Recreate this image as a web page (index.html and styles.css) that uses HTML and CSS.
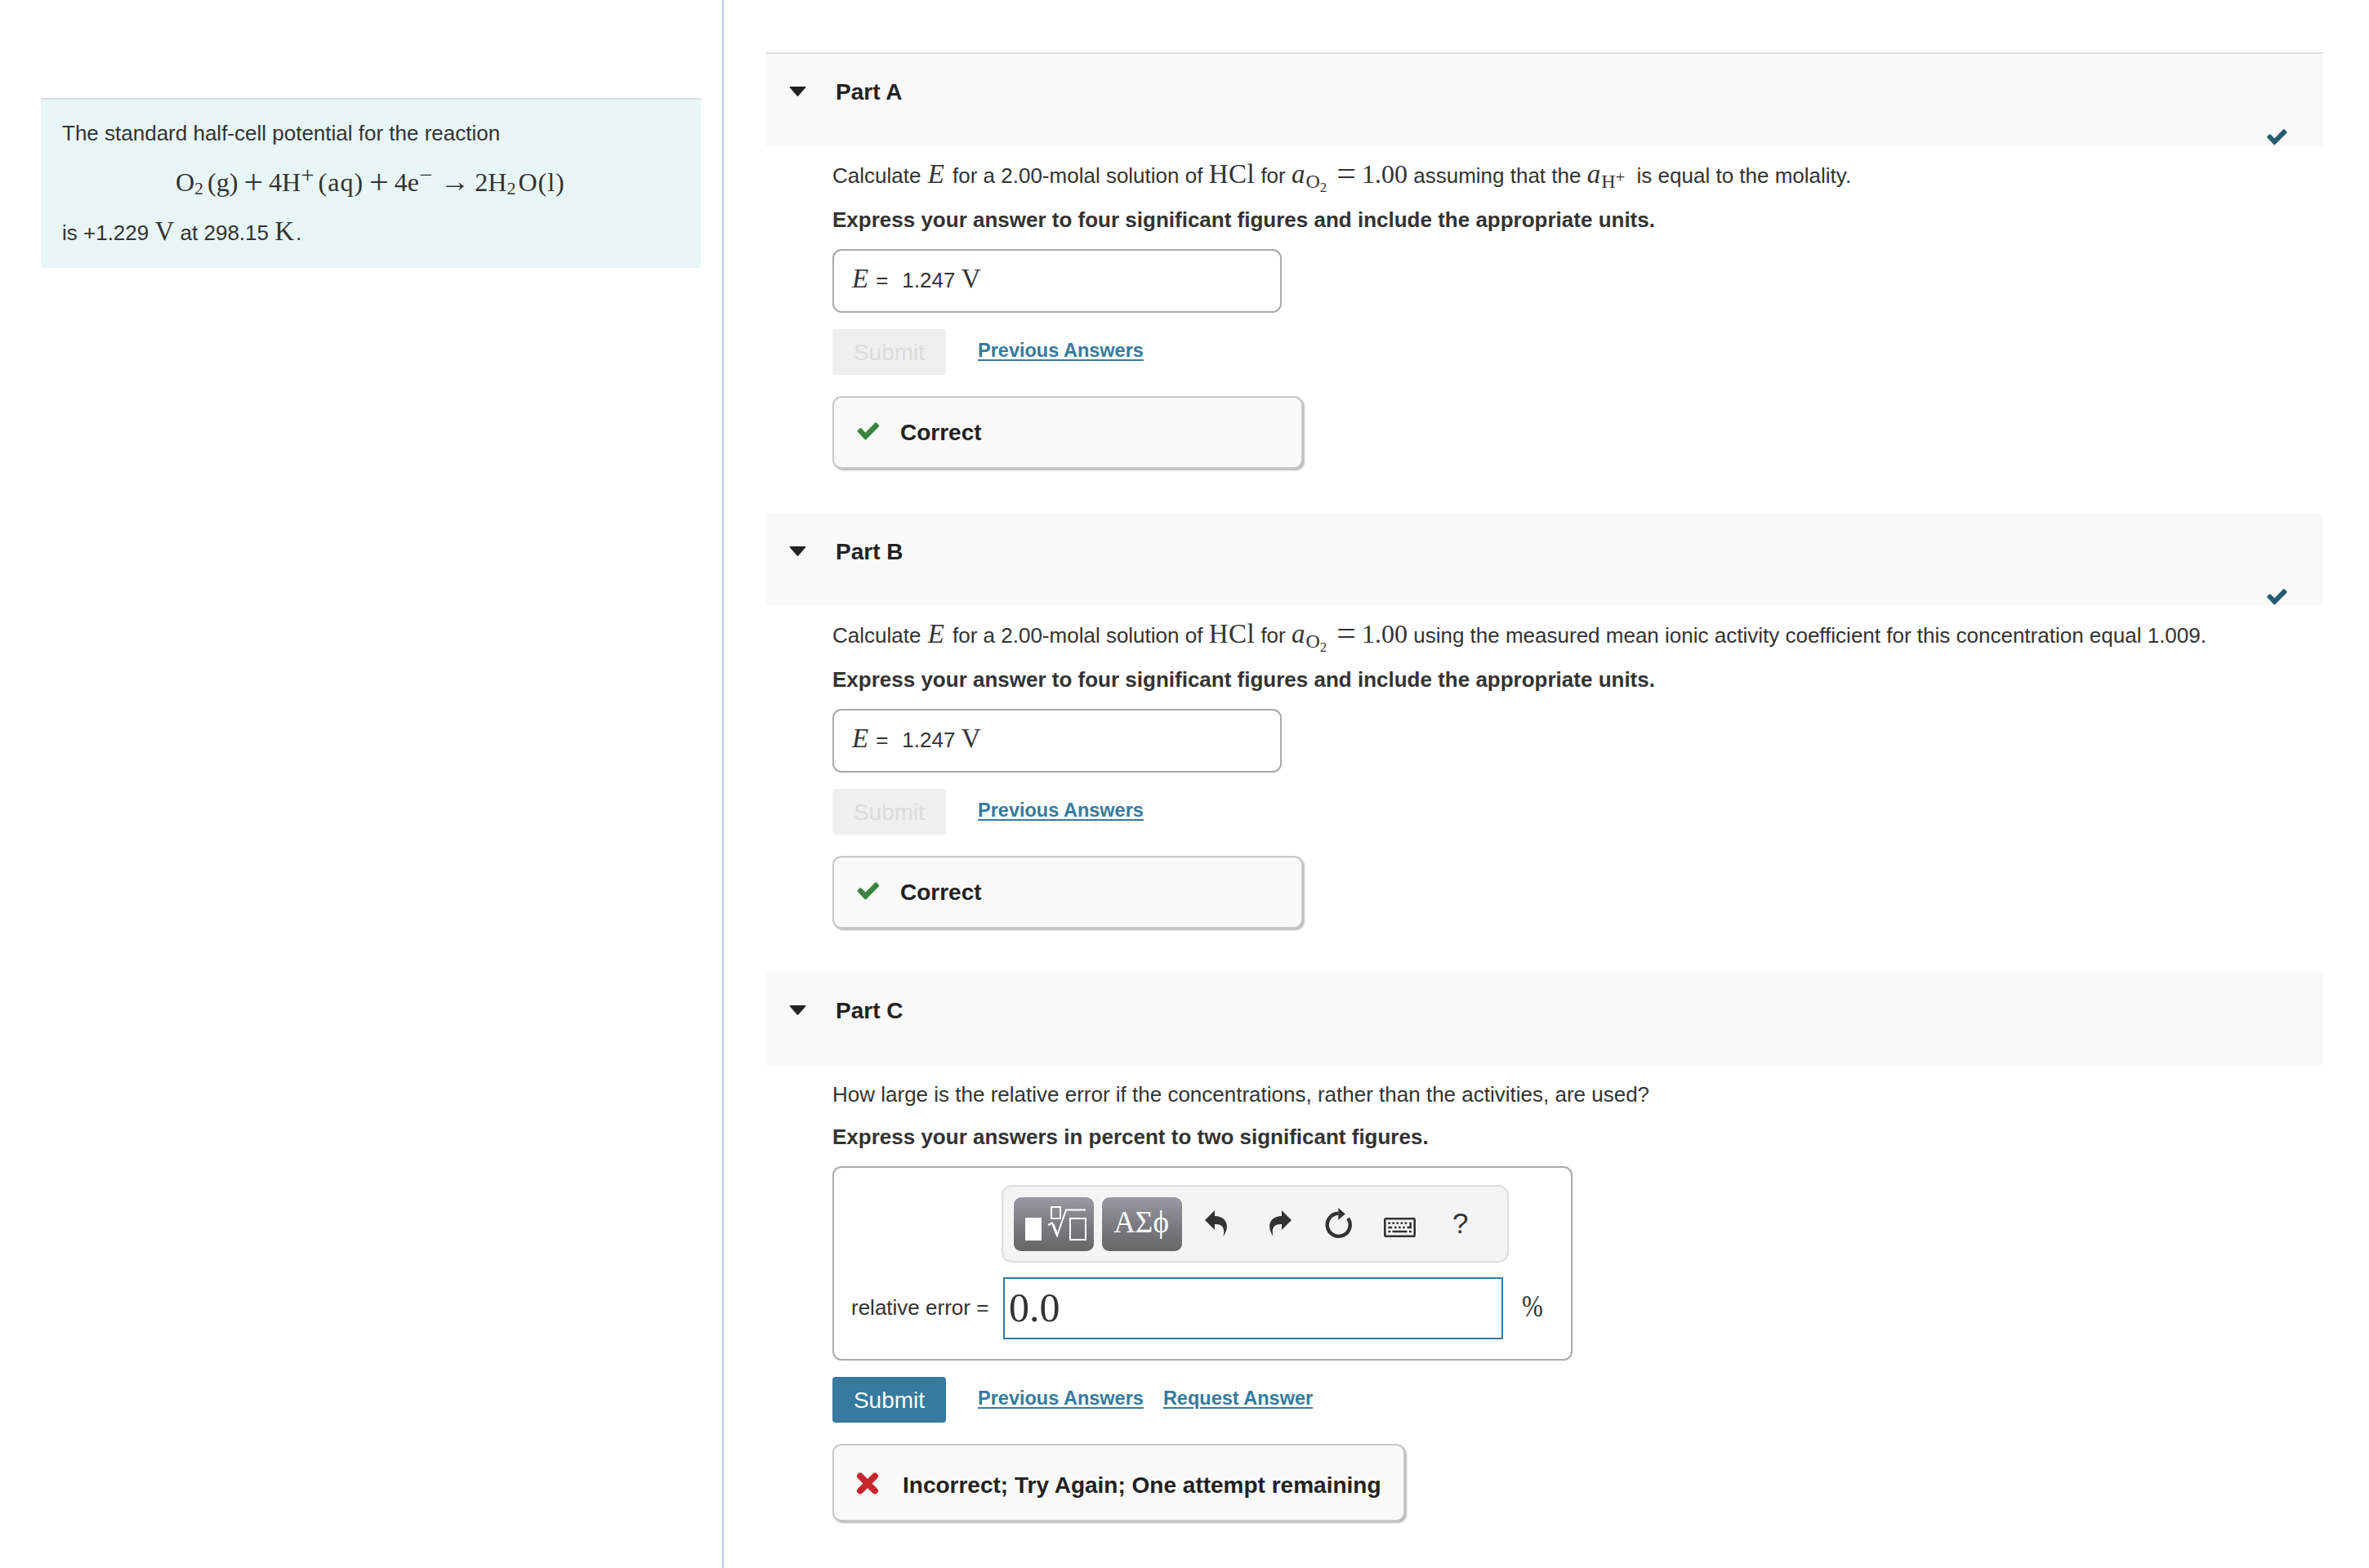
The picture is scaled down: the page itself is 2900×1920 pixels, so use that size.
FILE: index.html
```
<!DOCTYPE html>
<html lang="en">
<head>
<meta charset="utf-8">
<title>Half-cell potential</title>
<link rel="stylesheet" href="styles.css">
</head>
<body>
<svg class="defs" width="0" height="0">
  <symbol id="check" viewBox="0 0 25 20"><path d="M1.600 9.800L3.800 7.700L9.300 13.300L20.800 1.500L23.200 4L9.300 18.200Z" fill="currentColor" stroke="currentColor" stroke-width="2.600" stroke-linejoin="round"/></symbol>
  <symbol id="caret" viewBox="0 0 20 12"><path d="M1 0H19Q20.500 0 19.500 1.500L11 11.200Q10 12.300 9 11.200L.5 1.500Q-.5 0 1 0Z" fill="currentColor"/></symbol>
</svg>
<div class="page">
  <aside class="side">
    <div class="intro">
      <p class="intro-first">The standard half-cell potential for the reaction</p>
      <p class="equation math">O<sub>2</sub><span class="thin"></span>(g)<span class="op">+</span>4H<sup>+</sup><span class="thin"></span><span class="aq">(aq)</span><span class="op">+</span>4e<sup>−</sup><span class="arrow">→</span>2H<sub>2</sub><span class="hair"></span><span class="aq">O(l)</span></p>
      <p class="intro-last">is +1.229 <span class="math">V</span> at 298.15 <span class="math k">K</span>.</p>
    </div>
  </aside>
  <main class="main">
    <section class="part first">
      <header class="head"><svg class="caret"><use href="#caret"/></svg><h2>Part A</h2><svg class="done"><use href="#check"/></svg></header>
      <div class="body">
        <p class="question">Calculate <i class="math e">E</i> for a 2.00-molal solution of <span class="math hcl">HCl</span> for <span class="math"><i>a</i><span class="low">O<small>2</small></span><span class="eq">=</span><span class="num">1.00</span></span> assuming that the <span class="math"><i>a</i><span class="low">H<small class="up">+</small></span></span><span class="gap"></span> is equal to the molality.</p>
        <p class="instruct">Express your answer to four significant figures and include the appropriate units.</p>
        <div class="answer"><i class="math">E</i><span class="equals">=</span><span>1.247 <span class="math">V</span></span></div>
        <div class="actions"><button class="submit off">Submit</button><a>Previous Answers</a></div>
        <div class="result"><svg class="tick"><use href="#check"/></svg>Correct</div>
      </div>
    </section>
    <section class="part">
      <header class="head"><svg class="caret"><use href="#caret"/></svg><h2>Part B</h2><svg class="done"><use href="#check"/></svg></header>
      <div class="body">
        <p class="question">Calculate <i class="math e">E</i> for a 2.00-molal solution of <span class="math hcl">HCl</span> for <span class="math"><i>a</i><span class="low">O<small>2</small></span><span class="eq">=</span><span class="num">1.00</span></span> using the measured mean ionic activity coefficient for this concentration equal 1.009.</p>
        <p class="instruct">Express your answer to four significant figures and include the appropriate units.</p>
        <div class="answer"><i class="math">E</i><span class="equals">=</span><span>1.247 <span class="math">V</span></span></div>
        <div class="actions"><button class="submit off">Submit</button><a>Previous Answers</a></div>
        <div class="result"><svg class="tick"><use href="#check"/></svg>Correct</div>
      </div>
    </section>
    <section class="part last">
      <header class="head"><svg class="caret"><use href="#caret"/></svg><h2>Part C</h2></header>
      <div class="body">
        <p class="question">How large is the relative error if the concentrations, rather than the activities, are used?</p>
        <p class="instruct">Express your answers in percent to two significant figures.</p>
        <div class="editor">
          <div class="toolbar">
            <div class="key"><svg width="98" height="66" viewBox="0 0 98 66" fill="none" stroke="#fff" stroke-width="2"><path d="M14 25H34V53H14Z" fill="#fff" stroke="none"/><path d="M46 12H57V26H46Z"/><path d="M42 34L47 31.500L53 47L64 15.500H88"/><path d="M48 33L53 46" stroke-width="3"/><path d="M69 26H88V52H69Z"/></svg></div>
            <div class="key greek">ΑΣϕ</div>
            <svg class="ico undo" viewBox="0 0 28 32"><path d="M0 12L12 0V7C25 7 32 18 22.500 32C25 21 21 16.500 12 17V24Z" fill="#333"/></svg>
            <svg class="ico redo" viewBox="0 0 28 32"><path d="M28 12L16 0V7C3 7 -4 18 5.500 32C3 21 7 16.500 16 17V24Z" fill="#333"/></svg>
            <svg class="ico reset" viewBox="0 0 34 38"><path d="M28.200 12.800A14 14 0 1 1 16.500 6.800" fill="none" stroke="#333" stroke-width="4.400"/><path d="M16.300 0L24.800 7.500L16.300 14.800Z" fill="#333"/></svg>
            <svg class="ico keyboard" viewBox="0 0 39 24"><rect x="1.300" y="1.300" width="36.400" height="21.400" rx="1.500" fill="none" stroke="#333" stroke-width="2.600"/><path d="M5.300 6.700H29" stroke="#333" stroke-width="2.600" stroke-dasharray="2.600 2.500"/><path d="M13 12H27" stroke="#333" stroke-width="2.600" stroke-dasharray="2.600 2.500"/><path d="M5.300 12h5M28.500 12H34M32.600 5.400V13.300M5.300 17h2.800M10.500 17h18M31 17h2.800" fill="none" stroke="#333" stroke-width="2.400"/></svg>
            <span class="help">?</span>
          </div>
          <div class="entry"><span class="label">relative error =</span><div class="field">0.0</div><span class="percent">%</span></div>
        </div>
        <div class="actions"><button class="submit">Submit</button><a>Previous Answers</a><a class="request">Request Answer</a></div>
        <div class="result wrong"><svg class="cross" viewBox="0 0 28 27"><path d="M5 4.500L23 22.500M23 4.500L5 22.500" stroke="#c9252d" stroke-width="8" stroke-linecap="round"/></svg>Incorrect; Try Again; One attempt remaining</div>
      </div>
    </section>
  </main>
</div>
</body>
</html>
```
FILE: styles.css
```
* { box-sizing: border-box; }
body { margin: 0; background: #fff; color: #333; font: 26px/32px "Liberation Sans", Arial, sans-serif; }
p, h2 { margin: 0; white-space: nowrap; }
.defs { position: absolute; }
.page { display: flex; width: 2900px; height: 1920px; overflow: hidden; }
.side { width: 886px; border-right: 2px solid #b9cbdc; padding: 120px 26px 0 50px; }
.intro { height: 208px; background: #e8f6f6; border-top: 2px solid #dcdfdf; padding: 25px 26px 0; }
.math { font-family: "Liberation Serif", "Times New Roman", serif; font-size: 33px; line-height: 0; }
.equation { font-size: 32px; line-height: 40px; margin: 24px 0 0 139px; height: 40px; }
.equation sub, .equation sup { font-size: 22px; line-height: 0; vertical-align: baseline; position: relative; }
.equation sub { top: 4px; }
.equation sup { top: -10px; font-size: 29px; }
.thin { display: inline-block; width: 5px; }
.hair { display: inline-block; width: 3px; }
.aq { letter-spacing: 1px; }
.op { font-size: 42px; line-height: 0; margin: 0 7px; vertical-align: -3px; }
.arrow { display: inline-block; width: 33px; margin: 0 9px 0 10px; font-size: 36px; line-height: 0; text-align: center; }
.intro-last { margin-top: 26px; }
.k { margin-right: 2px; }
.main { width: 2014px; padding: 64px 56px 0 52px; }
.part { height: 563px; }
.part.first { height: 565px; border-top: 2px solid #dedede; }
.head { display: flex; height: 113px; background: #f9f9f9; padding: 0 44px 0 28px; color: #222; }
.caret { width: 21px; height: 12px; margin-top: 40px; }
h2 { font-size: 28px; line-height: 32px; margin: 31px 0 0 36px; }
.done { width: 25px; height: 20px; margin: 92px 0 0 auto; color: #255c70; }
.body { padding-left: 81px; }
.question { height: 32px; margin-top: 20px; }
.instruct { font-weight: bold; margin-top: 22px; }
.e { margin: 0 3px 0 1px; }
.hcl { letter-spacing: .5px; }
.low { font-size: 24px; position: relative; top: 6px; margin-left: 1px; }
.low small { font-size: 17px; position: relative; top: 5px; }
.low .up { top: -6px; font-size: 21px; }
.eq { font-size: 42px; margin: 0 7px 0 12px; vertical-align: -2px; line-height: 0; }
.num { font-size: 32px; }
.gap { display: inline-block; width: 7px; }
.answer { width: 550px; height: 78px; margin-top: 20px; border: 2px solid #aaa; border-radius: 11px; padding: 20px 22px; white-space: nowrap; }
.equals { margin: 0 17px 0 9px; }
.actions { display: flex; height: 56px; margin-top: 20px; }
.submit { width: 139px; height: 56px; border: 0; border-radius: 4px; padding: 2px 0 0; background: #367a9e; color: #fff; font: 28px/32px "Liberation Sans", Arial, sans-serif; }
.submit.off { background: #efefef; color: #dcdcdc; }
.actions a { margin: 10px 0 0 39px; color: #367a9e; font-size: 23.5px; font-weight: bold; text-decoration: underline; text-decoration-thickness: 2px; text-underline-offset: 3px; }
.actions a.request { margin-left: 24px; }
.result { display: flex; align-items: center; width: 576px; height: 89px; margin-top: 26px; padding: 0 28px; border: 2px solid #c8c8c8; border-radius: 11px; background: #f9f9f9; box-shadow: 2px 2px 2px #bbb; color: #222; font-size: 28px; font-weight: bold; white-space: nowrap; }
.tick { width: 28px; height: 22px; margin: 0 25px 3px 0; color: #3a8541; }
.last .head { margin-top: -1px; }
.last .instruct { margin-top: 20px; }
.editor { width: 906px; height: 238px; margin-top: 20px; border: 2px solid #aaa; border-radius: 11px; padding: 21px 0 0 20px; }
.toolbar { display: flex; width: 621px; height: 95px; margin-left: 185px; border: 2px solid #ddd; border-radius: 13px; background: #f4f4f4; padding: 13px 0 0 13px; }
.key { width: 98px; height: 66px; margin-right: 10px; border-radius: 9px; background: linear-gradient(#9b99a3, #7d7c82 50%, #666); box-shadow: -1px -2px 0 #fff; color: #fff; }
.greek { font: 37px/62px "Liberation Serif", "Times New Roman", serif; text-align: center; padding-right: 2px; }
.ico { flex: none; }
.undo { width: 28px; height: 32px; margin: 16px 0 0 18px; }
.redo { width: 28px; height: 32px; margin: 16px 0 0 50px; }
.reset { width: 34px; height: 38px; margin: 13px 0 0 41px; }
.keyboard { width: 39px; height: 24px; margin: 25px 0 0 38px; }
.help { font-size: 35px; margin: 16px 0 0 45px; }
.entry { display: flex; margin-top: 18px; }
.label { width: 187px; padding: 21px 0 0 1px; white-space: nowrap; }
.field { width: 612px; height: 76px; border: 2px solid #367a9e; padding-left: 5px; font: 50px/70px "Liberation Serif", "Times New Roman", serif; }
.percent { margin: 20px 0 0 23px; font: 31px/36px "Liberation Serif", "Times New Roman", serif; transform: scaleY(1.2); }
.wrong { width: 701px; height: 95px; }
.last .result { padding: 6px 27px 0; }
.cross { width: 28px; height: 27px; margin: 0 29px 4px 0; }
```
